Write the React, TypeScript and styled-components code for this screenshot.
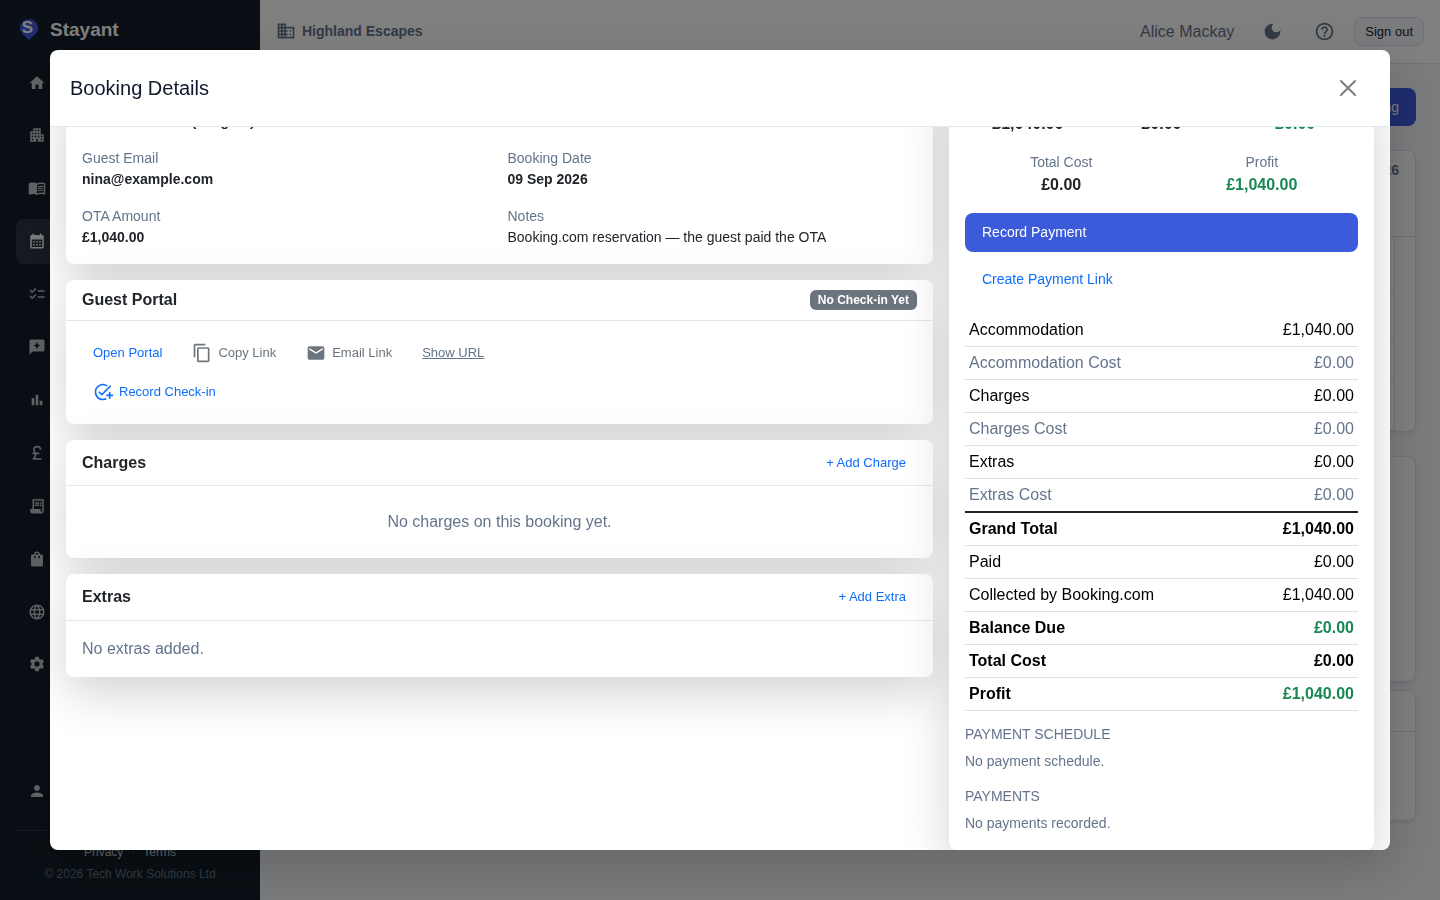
import React from "react";
import styled, { createGlobalStyle } from "styled-components";
import { MdHome, MdApartment, MdMenuBook, MdCalendarMonth, MdChecklist, MdBarChart, MdReceiptLong, MdShoppingBag, MdLanguage, MdSettings, MdPerson, MdDomain, MdDarkMode, MdHelpOutline, MdContentCopy, MdEmail, MdAddTask } from "react-icons/md";

const Global = createGlobalStyle`
  *, *::before, *::after { box-sizing: border-box; }
  html, body, #root { height: 100%; }
  body { margin: 0; overflow: hidden; font: 16px/24px "Liberation Sans", Arial, sans-serif; color: #212529; background: #f5f7fb; }
  h1, h2, h3, h4, p, dl, dt, dd { margin: 0; font: inherit; }
  button { font: inherit; cursor: pointer; }
`;

const Page = styled.div`
  display: flex;
  height: 100vh;
  overflow: hidden;
`;

const Sidebar = styled.aside`
  flex: 0 0 260px;
  display: flex;
  flex-direction: column;
  padding: 16px 16px 15px;
  background: #131e29;
  color: #c3cad3;
`;

const Brand = styled.a`
  display: flex;
  align-items: center;
  gap: 8px;
  height: 28px;
  color: #fff;
  font-size: 19px;
  font-weight: 700;
  text-decoration: none;
`;

const Nav = styled.nav`
  display: flex;
  flex: 0 0 627px;
  flex-direction: column;
  justify-content: space-between;
  margin-top: 16px;
`;

const NavItem = styled.a<{ $active?: boolean }>`
  display: flex;
  align-items: center;
  height: 45px;
  padding: 0 12px;
  border-radius: 8px;
  color: ${(p) => (p.$active ? "#fff" : "#c3cad3")};
  background: ${(p) => (p.$active ? "#2a3642" : "transparent")};
  svg { width: 18px; }
`;

const SideFooter = styled.footer`
  margin-top: 17px;
  padding-top: 10px;
  border-top: 1px solid #2a3442;
  text-align: center;
  font-size: 12px;
  line-height: 22px;
  color: #64748b;
`;

const FootLinks = styled.div`
  display: flex;
  justify-content: center;
  gap: 8px;
  a { color: #c3cad3; text-decoration: none; }
`;

const Spacer = styled.div`
  flex: 1;
`;

const Main = styled.div`
  flex: 1;
  min-width: 0;
`;

const Topbar = styled.header`
  display: flex;
  align-items: center;
  height: 64px;
  padding: 0 16px;
  background: #fff;
  border-bottom: 1px solid #dde4ee;
  color: #64748b;
`;

const Org = styled.div`
  display: flex;
  flex: 1;
  align-items: center;
  gap: 6px;
  padding-bottom: 2px;
  font-size: 14px;
  font-weight: 700;
`;

const UserName = styled.span`
  margin-right: 4px;
`;

const IconButton = styled.button`
  display: flex;
  align-items: center;
  justify-content: center;
  width: 36px;
  height: 36px;
  margin-left: 16px;
  padding: 0;
  border: 0;
  background: none;
  color: #64748b;
`;

const SignOut = styled.button`
  height: 29px;
  margin-left: 12px;
  padding: 0 10px;
  border: 1px solid #d9e1ec;
  border-radius: 8px;
  background: #f5f7fb;
  color: #212529;
  font-size: 13px;
`;

const Content = styled.main`
  display: flex;
  flex-direction: column;
  padding: 24px;
`;

const NewBooking = styled.button`
  align-self: flex-end;
  height: 38px;
  margin-bottom: 24px;
  padding: 0 17px;
  border: 0;
  border-radius: 8px;
  background: #3c5bdb;
  color: #fff;
  font-size: 14px;
`;

const Panel = styled.section<{ $height: number; $gap?: number }>`
  height: ${(p) => p.$height}px;
  margin-bottom: ${(p) => p.$gap ?? 0}px;
  border: 1px solid #dde4ee;
  border-radius: 8px;
  background: #fff;
  box-shadow: 0 2px 4px rgba(0, 0, 0, 0.08);
`;

const PanelHead = styled.div<{ $height: number }>`
  height: ${(p) => p.$height}px;
  padding: 7px 16px;
  border-bottom: 1px solid #dde4ee;
  text-align: right;
  font-size: 14px;
  font-weight: 700;
  color: #64748b;
`;

const Lane = styled.div<{ $height: number }>`
  height: ${(p) => p.$height}px;
  margin-right: 20px;
  border-right: 1px solid #dde4ee;
  border-bottom: 1px solid #dde4ee;
`;

const Backdrop = styled.div`
  position: fixed;
  inset: 0;
  display: flex;
  padding: 50px;
  background: rgba(0, 0, 0, 0.5);
`;

const Dialog = styled.div`
  display: flex;
  flex: 1;
  flex-direction: column;
  min-width: 0;
  overflow: hidden;
  border-radius: 8px;
  background: #fff;
  box-shadow: 0 16px 48px rgba(0, 0, 0, 0.175);
`;

const DialogHead = styled.header`
  display: flex;
  flex: none;
  align-items: center;
  justify-content: space-between;
  height: 77px;
  padding: 0 22px 0 20px;
  border-bottom: 1px solid #e2e8f0;
  h1 { font-size: 20px; line-height: 30px; color: #0f172a; }
`;

const Close = styled.button`
  display: flex;
  padding: 12px;
  border: 0;
  background: none;
  color: #7f7f7f;
`;

/* The body is scrolled to its end, so its content hangs from the bottom edge. */
const DialogBody = styled.div`
  display: flex;
  flex: 1;
  flex-direction: column;
  justify-content: flex-end;
  min-height: 0;
  overflow: hidden;
`;

const Columns = styled.div`
  display: grid;
  grid-template-columns: minmax(0, 867fr) minmax(0, 425fr);
  gap: 16px;
  padding: 0 16px;
`;

const Stack = styled.div`
  display: flex;
  flex-direction: column;
  gap: 16px;
`;

const Card = styled.section`
  border-radius: 8px;
  background: #fff;
  box-shadow: 0 16px 48px rgba(0, 0, 0, 0.175);
`;

const CardHead = styled.header<{ $height: number }>`
  display: flex;
  align-items: center;
  justify-content: space-between;
  height: ${(p) => p.$height}px;
  padding: 0 16px;
  border-bottom: 1px solid #e2e8f0;
  h2 { font-weight: 700; }
`;

const Badge = styled.span`
  padding: 4px 8px;
  border-radius: 6px;
  background: #6c757d;
  color: #fff;
  font-size: 12px;
  font-weight: 700;
  line-height: 12px;
`;

const Details = styled.dl`
  display: grid;
  grid-template-columns: 1fr 1fr;
  gap: 16px;
  padding: 15px 16px 16px;
  font-size: 14px;
  line-height: 21px;
  dt { color: #64748b; }
`;

const Value = styled.dd<{ $plain?: boolean }>`
  font-weight: ${(p) => (p.$plain ? 400 : 700)};
`;

const ActionRows = styled.div`
  display: flex;
  flex-direction: column;
  gap: 8px;
  padding: 16px 16px 17px;
`;

const Actions = styled.div`
  display: flex;
  flex-wrap: wrap;
  gap: 8px;
`;

const Action = styled.button<{ $tone?: "muted" | "slate" }>`
  display: flex;
  align-items: center;
  gap: 6px;
  height: 31px;
  padding: 0 11px;
  border: 0;
  background: none;
  color: ${(p) => (p.$tone === "muted" ? "#6c757d" : p.$tone === "slate" ? "#64748b" : "#0d6efd")};
  font-size: 13px;
  text-decoration: ${(p) => (p.$tone === "slate" ? "underline" : "none")};
`;

const Empty = styled.p<{ $center?: boolean }>`
  padding: ${(p) => (p.$center ? "24px 16px" : "16px")};
  text-align: ${(p) => (p.$center ? "center" : "left")};
  color: #64748b;
`;

const Summary = styled(Card)`
  padding: 16px;
`;

const Stats = styled.dl<{ $cols: number }>`
  display: grid;
  grid-template-columns: repeat(${(p) => p.$cols}, 1fr);
  margin: 0 -4px 16px;
  text-align: center;
  dt { color: #64748b; font-size: 14px; line-height: 21px; }
`;

const Amount = styled.dd<{ $good?: boolean }>`
  font-weight: 700;
  color: ${(p) => (p.$good ? "#198754" : "#212529")};
`;

const PayButton = styled.button<{ $solid?: boolean }>`
  display: block;
  width: 100%;
  height: 39px;
  margin-bottom: 8px;
  padding: 0 17px 2px;
  border: 0;
  border-radius: 8px;
  background: ${(p) => (p.$solid ? "#3c5bdb" : "none")};
  color: ${(p) => (p.$solid ? "#fff" : "#0d6efd")};
  font-size: 14px;
  text-align: left;
`;

const Totals = styled.table`
  width: 100%;
  margin: 15px 0 13px;
  border-collapse: collapse;
  color: #000;
`;

const TotalRow = styled.tr<{ $muted?: boolean; $bold?: boolean; $rule?: boolean }>`
  color: ${(p) => (p.$muted ? "#64748b" : "#000")};
  font-weight: ${(p) => (p.$bold ? 700 : 400)};
  border-bottom: 1px solid #dee2e6;
  ${(p) => p.$rule && "border-top: 2px solid #212529;"}
  th { padding: 4px; font-weight: inherit; text-align: left; }
`;

const Sum = styled.td<{ $good?: boolean }>`
  padding: 4px;
  text-align: right;
  color: ${(p) => (p.$good ? "#198754" : "inherit")};
`;

const Section = styled.div`
  margin-bottom: 14px;
  font-size: 14px;
  line-height: 21px;
  color: #64748b;
  &:last-child { margin-bottom: 0; }
  h3 { margin-bottom: 6px; text-transform: uppercase; }
`;

const Logo = () => (
  <svg width="26" height="26" viewBox="0 0 26 26" aria-hidden="true">
    <path d="M13 2a9 9 0 0 0-9 9c0 5 5 8 9 12 4-4 9-7 9-12a9 9 0 0 0-9-9z" fill="#3c5bdb" />
    <text x="11.500" y="16" textAnchor="middle" fontSize="17" fontWeight="700" fill="#fff">S</text>
  </svg>
);

const SparkMessage = () => (
  <svg width="18" height="18" viewBox="0 0 24 24" fill="currentColor" aria-hidden="true">
    <path d="M20 2H4a2 2 0 0 0-2 2v18l4-4h14a2 2 0 0 0 2-2V4a2 2 0 0 0-2-2zm-6.600 9.400L12 15l-1.400-3.600L7 10l3.600-1.400L12 5l1.400 3.600L17 10z" />
  </svg>
);

const Pound = () => (
  <svg width="18" height="18" viewBox="0 0 24 24" fill="none" stroke="currentColor" strokeWidth="2.200" aria-hidden="true">
    <path d="M17 7.500C16.500 5 14.800 3.500 12.500 3.500 9.800 3.500 8 5.300 8 7.800c0 2.700 2 4 2 7 0 2.400-1.200 4.200-3.500 5.200H18M6 12.500h9" />
  </svg>
);

const nav = [
  { label: "Home", icon: <MdHome size={18} /> },
  { label: "Properties", icon: <MdApartment size={18} /> },
  { label: "Guides", icon: <MdMenuBook size={18} /> },
  { label: "Calendar", icon: <MdCalendarMonth size={18} />, active: true },
  { label: "Tasks", icon: <MdChecklist size={18} /> },
  { label: "Messages", icon: <SparkMessage /> },
  { label: "Reports", icon: <MdBarChart size={16} /> },
  { label: "Finance", icon: <Pound /> },
  { label: "Invoices", icon: <MdReceiptLong size={18} /> },
  { label: "Shop", icon: <MdShoppingBag size={18} /> },
  { label: "Website", icon: <MdLanguage size={18} /> },
  { label: "Settings", icon: <MdSettings size={18} /> },
];

const totals = [
  { label: "Accommodation", value: "£1,040.00" },
  { label: "Accommodation Cost", value: "£0.00", muted: true },
  { label: "Charges", value: "£0.00" },
  { label: "Charges Cost", value: "£0.00", muted: true },
  { label: "Extras", value: "£0.00" },
  { label: "Extras Cost", value: "£0.00", muted: true },
  { label: "Grand Total", value: "£1,040.00", bold: true, rule: true },
  { label: "Paid", value: "£0.00" },
  { label: "Collected by Booking.com", value: "£1,040.00" },
  { label: "Balance Due", value: "£0.00", bold: true, good: true },
  { label: "Total Cost", value: "£0.00", bold: true },
  { label: "Profit", value: "£1,040.00", bold: true, good: true },
];

export default function App() {
  return (
    <>
      <Global />
      <Page>
        <Sidebar>
          <Brand href="#"><Logo />Stayant</Brand>
          <Nav>
            {nav.map((n) => (
              <NavItem key={n.label} href="#" aria-label={n.label} $active={n.active}>{n.icon}</NavItem>
            ))}
          </Nav>
          <Spacer />
          <NavItem href="#" aria-label="Account"><MdPerson size={18} /></NavItem>
          <SideFooter>
            <FootLinks><a href="#">Privacy</a><span>·</span><a href="#">Terms</a></FootLinks>
            © 2026 Tech Work Solutions Ltd
          </SideFooter>
        </Sidebar>
        <Main>
          <Topbar>
            <Org><MdDomain size={20} />Highland Escapes</Org>
            <UserName>Alice Mackay</UserName>
            <IconButton aria-label="Dark mode"><MdDarkMode size={21} /></IconButton>
            <IconButton aria-label="Help"><MdHelpOutline size={21} /></IconButton>
            <SignOut>Sign out</SignOut>
          </Topbar>
          <Content>
            <NewBooking>New Booking</NewBooking>
            <Panel $height={282} $gap={24}>
              <PanelHead $height={86}>2026</PanelHead>
              <Lane $height={53} /><Lane $height={47} /><Lane $height={47} /><Lane $height={47} />
            </Panel>
            <Panel $height={226} $gap={8} />
            <Panel $height={131}><PanelHead $height={41} /></Panel>
          </Content>
        </Main>
      </Page>
      <Backdrop>
        <Dialog role="dialog" aria-modal="true" aria-labelledby="dialog-title">
          <DialogHead>
            <h1 id="dialog-title">Booking Details</h1>
            <Close aria-label="Close">
              <svg width="16" height="16" viewBox="0 0 16 16" stroke="currentColor" strokeWidth="2" strokeLinecap="round">
                <path d="M1 1l14 14M15 1L1 15" />
              </svg>
            </Close>
          </DialogHead>
          <DialogBody>
            <Columns>
              <Stack>
                <Card>
                  <Details>
                    <div><dt>Dates</dt><Value>12 - 14 Oct 2026 (2 nights)</Value></div>
                    <div />
                    <div><dt>Guest Email</dt><Value>nina@example.com</Value></div>
                    <div><dt>Booking Date</dt><Value>09 Sep 2026</Value></div>
                    <div><dt>OTA Amount</dt><Value>£1,040.00</Value></div>
                    <div><dt>Notes</dt><Value $plain>Booking.com reservation — the guest paid the OTA</Value></div>
                  </Details>
                </Card>
                <Card>
                  <CardHead $height={41}><h2>Guest Portal</h2><Badge>No Check-in Yet</Badge></CardHead>
                  <ActionRows>
                    <Actions>
                      <Action>Open Portal</Action>
                      <Action $tone="muted"><MdContentCopy size={20} />Copy Link</Action>
                      <Action $tone="muted"><MdEmail size={20} />Email Link</Action>
                      <Action $tone="slate">Show URL</Action>
                    </Actions>
                    <Actions>
                      <Action><MdAddTask size={20} />Record Check-in</Action>
                    </Actions>
                  </ActionRows>
                </Card>
                <Card>
                  <CardHead $height={46}><h2>Charges</h2><Action>+ Add Charge</Action></CardHead>
                  <Empty $center>No charges on this booking yet.</Empty>
                </Card>
                <Card>
                  <CardHead $height={47}><h2>Extras</h2><Action>+ Add Extra</Action></CardHead>
                  <Empty>No extras added.</Empty>
                </Card>
              </Stack>
              <Summary>
                <Stats $cols={3}>
                  <div><dt>Total</dt><Amount>£1,040.00</Amount></div>
                  <div><dt>Paid</dt><Amount>£0.00</Amount></div>
                  <div><dt>Balance</dt><Amount $good>£0.00</Amount></div>
                </Stats>
                <Stats $cols={2}>
                  <div><dt>Total Cost</dt><Amount>£0.00</Amount></div>
                  <div><dt>Profit</dt><Amount $good>£1,040.00</Amount></div>
                </Stats>
                <PayButton $solid>Record Payment</PayButton>
                <PayButton>Create Payment Link</PayButton>
                <Totals>
                  <tbody>
                    {totals.map((t) => (
                      <TotalRow key={t.label} $muted={t.muted} $bold={t.bold} $rule={t.rule}>
                        <th scope="row">{t.label}</th>
                        <Sum $good={t.good}>{t.value}</Sum>
                      </TotalRow>
                    ))}
                  </tbody>
                </Totals>
                <Section><h3>Payment schedule</h3><p>No payment schedule.</p></Section>
                <Section><h3>Payments</h3><p>No payments recorded.</p></Section>
              </Summary>
            </Columns>
          </DialogBody>
        </Dialog>
      </Backdrop>
    </>
  );
}
